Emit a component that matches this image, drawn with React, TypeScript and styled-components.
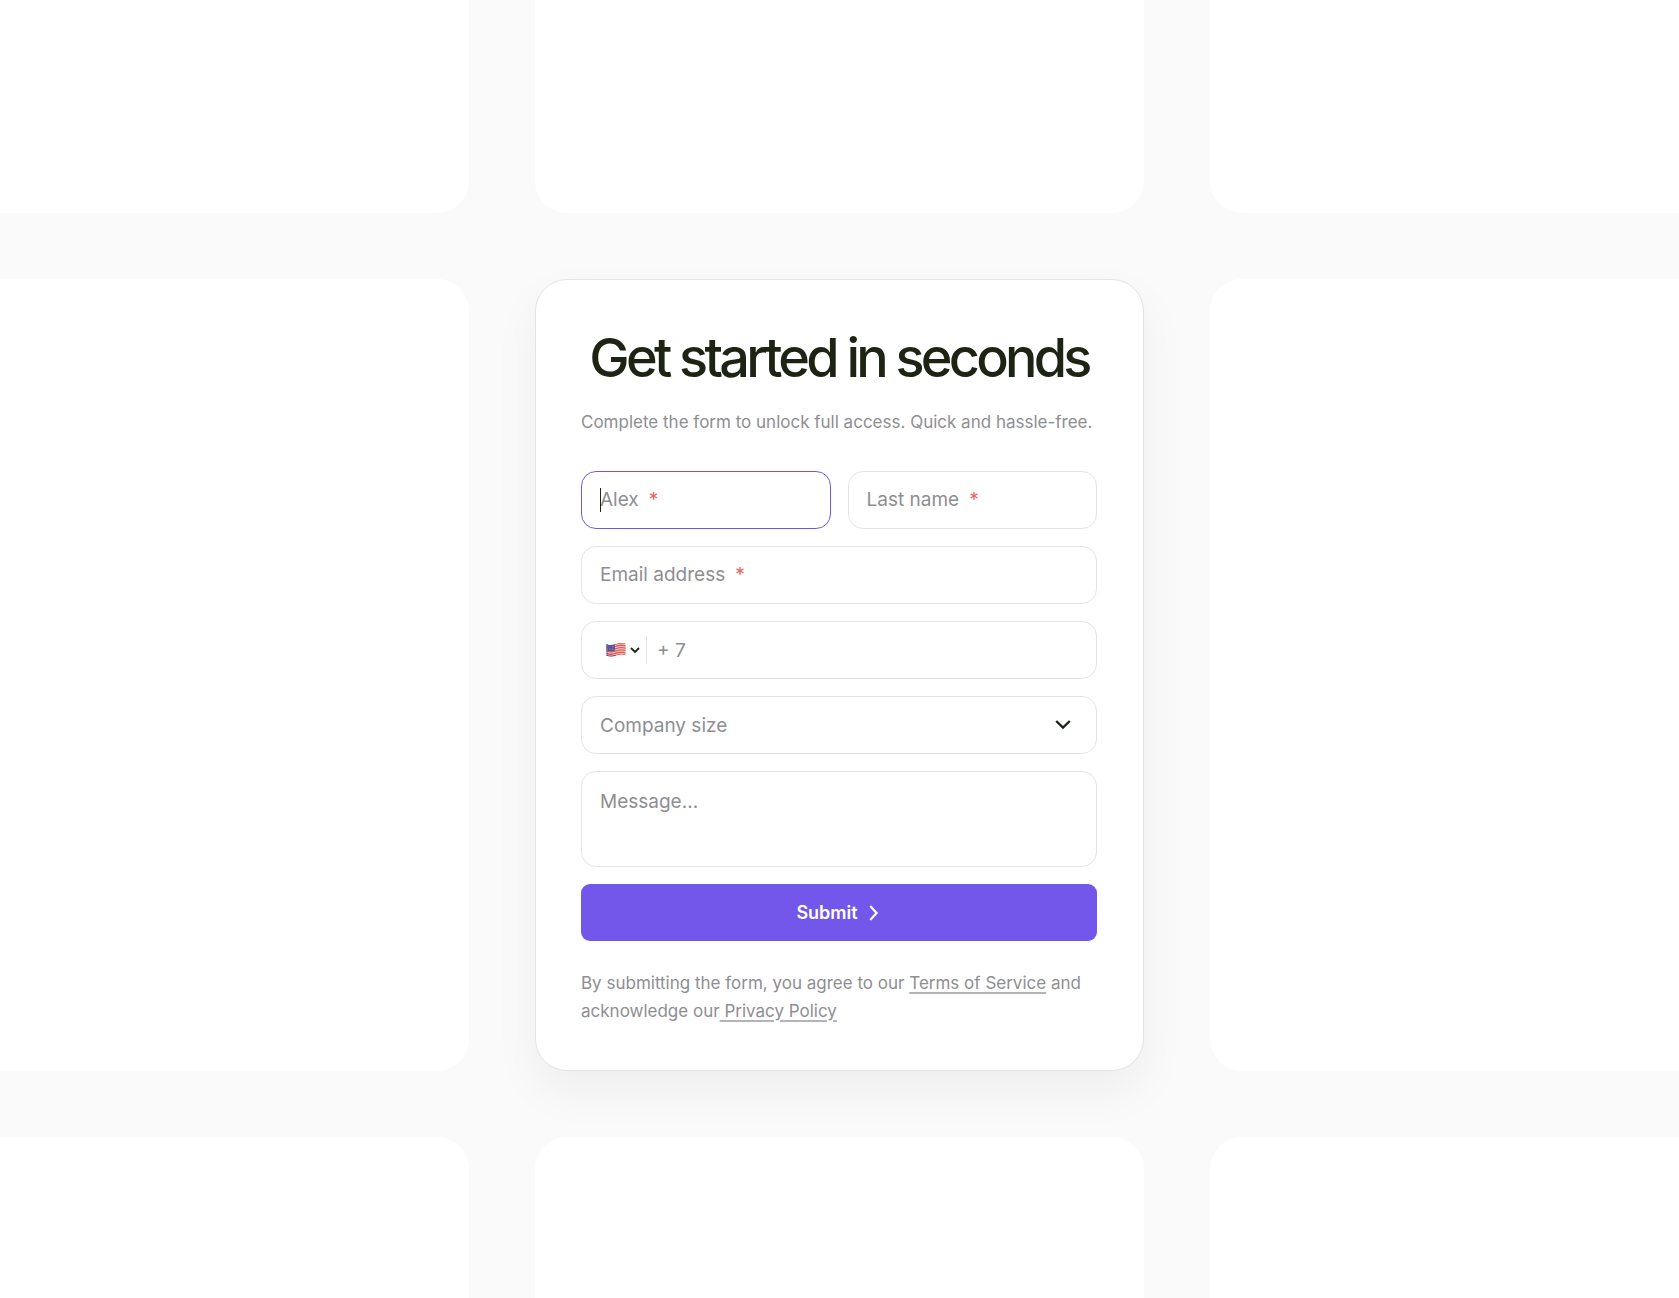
import React from "react";
import styled, { createGlobalStyle } from "styled-components";

const ink = "#1d2414";
const muted = "#8e8e93";
const line = "#e4e4e6";
const accent = "#7257ea";

const GlobalStyle = createGlobalStyle`
  *, *::before, *::after { box-sizing: border-box; }
  body {
    margin: 0;
    background: #fafafa;
    color: ${ink};
    font-family: Inter, "Liberation Sans", sans-serif;
    -webkit-font-smoothing: antialiased;
  }
`;

const Page = styled.div`
  display: grid;
  grid-template-columns: minmax(0, 1fr) minmax(0, 609px) minmax(0, 1fr);
  grid-template-rows: 213px auto minmax(160px, 1fr);
  gap: 66px;
  min-height: 100vh;
`;

type Side = "left" | "center" | "right";
type Band = "top" | "middle" | "bottom";

const Tile = styled.div<{ $side: Side; $band: Band }>`
  background: #fff;
  border-top-left-radius: ${(p) => (p.$side !== "left" && p.$band !== "top" ? 32 : 0)}px;
  border-top-right-radius: ${(p) => (p.$side !== "right" && p.$band !== "top" ? 32 : 0)}px;
  border-bottom-left-radius: ${(p) => (p.$side !== "left" && p.$band !== "bottom" ? 32 : 0)}px;
  border-bottom-right-radius: ${(p) => (p.$side !== "right" && p.$band !== "bottom" ? 32 : 0)}px;
`;

const Card = styled.main`
  z-index: 1;
  padding: 48px 46px 45px 45px;
  background: #fff;
  border: 1px solid ${line};
  border-radius: 32px;
  box-shadow: 0 20px 48px rgba(0, 0, 0, 0.05);
`;

const Title = styled.h1`
  margin: 0 0 20px;
  font-size: 54px;
  font-weight: 500;
  line-height: 60px;
  letter-spacing: -0.07em;
  text-align: center;
`;

const Copy = styled.p`
  margin: 0;
  color: ${muted};
  font-size: 17px;
  line-height: 28px;
`;

const Form = styled.form`
  display: grid;
  grid-template-columns: minmax(0, 1fr);
  gap: 17px;
  margin: 35px 0 28px;
`;

const Row = styled.div`
  display: grid;
  grid-template-columns: repeat(2, minmax(0, 1fr));
  gap: 17px;
`;

const Field = styled.div<{ $active?: boolean }>`
  position: relative;
  display: flex;
  align-items: center;
  height: 58px;
  border: 1px solid ${(p) => (p.$active ? accent : line)};
  border-radius: 15px;
  background: #fff;

  &:focus-within {
    border-color: ${accent};
  }
`;

const Hint = styled.label`
  position: absolute;
  left: 18px;
  display: flex;
  gap: 10px;
  color: ${muted};
  font-size: 19px;
  line-height: 24px;
  pointer-events: none;
`;

const Star = styled.span`
  color: #e5645e;
`;

const Caret = styled.span`
  position: absolute;
  left: 0;
  width: 1px;
  height: 24px;
  background: ${ink};
`;

const Input = styled.input`
  flex: 1;
  min-width: 0;
  height: 100%;
  padding: 0 18px;
  border: 0;
  outline: 0;
  background: transparent;
  color: ${ink};
  font: inherit;
  font-size: 19px;

  &::placeholder {
    color: ${muted};
    opacity: 1;
  }
  &:not(:placeholder-shown) + ${Hint} {
    display: none;
  }
`;

const PhoneInput = styled(Input)`
  padding: 0 18px 0 10px;
`;

const Country = styled.div`
  position: relative;
  display: flex;
  align-items: center;
  gap: 4px;
  height: 28px;
  margin-left: 24px;
  padding-right: 6px;
  border-right: 1px solid ${line};
`;

const CountrySelect = styled.select`
  position: absolute;
  inset: 0;
  width: 100%;
  opacity: 0;
  cursor: pointer;
`;

const SizeSelect = styled.select`
  flex: 1;
  height: 100%;
  padding: 0 18px;
  border: 0;
  outline: 0;
  border-radius: 15px;
  appearance: none;
  background: transparent;
  color: ${muted};
  font: inherit;
  font-size: 19px;
`;

const SelectArrow = styled.svg`
  position: absolute;
  right: 25px;
  pointer-events: none;
`;

const Message = styled.textarea`
  display: block;
  width: 100%;
  height: 96px;
  padding: 18px;
  border: 1px solid ${line};
  border-radius: 15px;
  outline: 0;
  resize: none;
  color: ${ink};
  font: inherit;
  font-size: 19px;
  line-height: 24px;

  &::placeholder {
    color: ${muted};
    opacity: 1;
  }
  &:focus {
    border-color: ${accent};
  }
`;

const Submit = styled.button`
  display: flex;
  align-items: center;
  justify-content: center;
  gap: 10px;
  height: 57px;
  border: 0;
  border-radius: 9px;
  background: ${accent};
  color: #fff;
  font: inherit;
  font-size: 18px;
  font-weight: 600;
  cursor: pointer;
`;

const Link = styled.a`
  color: inherit;
  text-decoration: underline;
  text-decoration-color: #b4b4b8;
  text-decoration-thickness: 2px;
  text-underline-offset: 3px;
`;

function Flag() {
  return (
    <svg width="20" height="16" viewBox="0 0 20 16" aria-hidden="true">
      <defs>
        <clipPath id="cloth">
          <path d="M0.5 2.2C4 3.6 7 3.2 10 2C13 .8 16 .6 19.5 1.6V13C16 12 13 12.4 10 13.6C7 14.8 4 14.8 .5 13.8Z" />
        </clipPath>
      </defs>
      <g clipPath="url(#cloth)">
        <rect width="20" height="16" fill="#f0dcdc" />
        <g fill="none" stroke="#e2544f" strokeWidth="1.4">
          {[0, 2.3, 4.6, 6.9, 9.2, 11.5].map((y) => (
            <path key={y} transform={`translate(0 ${y})`} d="M0 2.2C4 3.6 7 3.2 10 2C13 .8 16 .6 20 1.7" />
          ))}
        </g>
        <path d="M0 1H9V8.4C6 9.4 3 9.5 0 8.8Z" fill="#50529e" />
        <g fill="#c9c9ee">
          {[4.6, 6.4, 8].map((y) => [1.8, 4, 6.2, 8].map((x) => <circle key={`${x}-${y}`} cx={x} cy={y - x * 0.06} r=".4" />))}
        </g>
        <path d="M0 0H1.6V16H0Z" fill="#6c6c70" opacity=".8" />
        <path d="M0 13.4C4 14.5 7 14.3 10 13.1" fill="none" stroke="#6a4a52" strokeWidth=".9" />
      </g>
    </svg>
  );
}

const sides: Side[] = ["left", "center", "right"];

export default function App() {
  return (
    <>
      <GlobalStyle />
      <Page>
        {sides.map((side) => (
          <Tile key={side} $side={side} $band="top" />
        ))}
        <Tile $side="left" $band="middle" />
        <Card>
          <Title>Get started in seconds</Title>
          <Copy>Complete the form to unlock full access. Quick and hassle-free.</Copy>
          <Form onSubmit={(e) => e.preventDefault()}>
            <Row>
              <Field $active>
                <Input id="first" placeholder=" " required />
                <Hint htmlFor="first">
                  <Caret />
                  Alex <Star>*</Star>
                </Hint>
              </Field>
              <Field>
                <Input id="last" placeholder=" " required />
                <Hint htmlFor="last">
                  Last name <Star>*</Star>
                </Hint>
              </Field>
            </Row>
            <Field>
              <Input id="email" type="email" placeholder=" " required />
              <Hint htmlFor="email">
                Email address <Star>*</Star>
              </Hint>
            </Field>
            <Field>
              <Country>
                <Flag />
                <svg width="10" height="8" viewBox="0 0 10 8" fill="none" stroke={ink} strokeWidth="1.8" aria-hidden="true">
                  <path d="M1 2L5 6L9 2" />
                </svg>
                <CountrySelect aria-label="Country">
                  <option value="us" aria-label="United States" />
                </CountrySelect>
              </Country>
              <PhoneInput type="tel" aria-label="Phone number" placeholder="+ 7" />
            </Field>
            <Field>
              <SizeSelect aria-label="Company size" defaultValue="">
                <option value="">Company size</option>
              </SizeSelect>
              <SelectArrow width="16" height="12" viewBox="0 0 16 12" fill="none" stroke={ink} strokeWidth="2.4" aria-hidden="true">
                <path d="M1.2 2L8 8.6L14.8 2" />
              </SelectArrow>
            </Field>
            <Message aria-label="Message" placeholder="Message..." />
            <Submit type="submit">
              Submit
              <svg width="14" height="16" viewBox="0 0 14 16" fill="none" stroke="#fff" strokeWidth="2.2" aria-hidden="true">
                <path d="M2.2 1L8.6 8L2.2 15" />
              </svg>
            </Submit>
          </Form>
          <Copy>
            By submitting the form, you agree to our <Link href="#terms">Terms of Service</Link> and acknowledge our
            <Link href="#privacy"> Privacy Policy</Link>
          </Copy>
        </Card>
        <Tile $side="right" $band="middle" />
        {sides.map((side) => (
          <Tile key={side} $side={side} $band="bottom" />
        ))}
      </Page>
    </>
  );
}
